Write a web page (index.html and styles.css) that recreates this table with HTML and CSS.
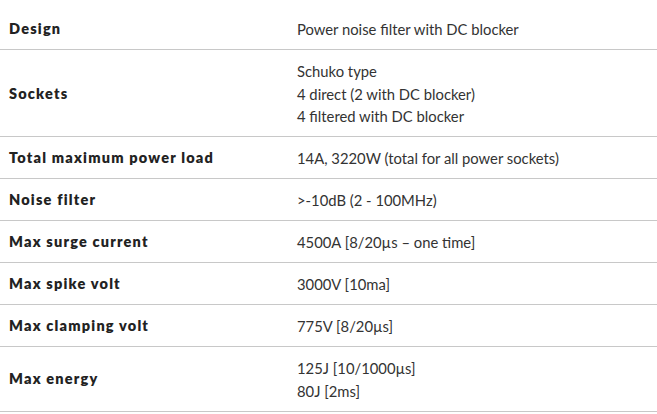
FILE: index.html
```html
<!DOCTYPE html>
<html>
<head>
<meta charset="utf-8">
<link rel="stylesheet" href="styles.css">
</head>
<body>
<table class="specs">
  <tbody>
    <tr><th>Design</th><td>Power noise filter with DC blocker</td></tr>
    <tr><th>Sockets</th><td>Schuko type<br>4 direct (2 with DC blocker)<br>4 filtered with DC blocker</td></tr>
    <tr><th>Total maximum power load</th><td>14A, 3220W (total for all power sockets)</td></tr>
    <tr><th>Noise filter</th><td>&gt;-10dB (2 - 100MHz)</td></tr>
    <tr><th>Max surge current</th><td>4500A [8/20µs – one time]</td></tr>
    <tr><th>Max spike volt</th><td>3000V [10ma]</td></tr>
    <tr><th>Max clamping volt</th><td>775V [8/20µs]</td></tr>
    <tr><th>Max energy</th><td>125J [10/1000µs]<br>80J [2ms]</td></tr>
  </tbody>
</table>
</body>
</html>
```

FILE: styles.css
```css
html, body {
  margin: 0;
  padding: 0;
  background: #fff;
}
body {
  padding-top: 8px;
  font-family: Lato, "Noto Sans", sans-serif;
}
.specs {
  width: 100%;
  border-collapse: collapse;
}
.specs th,
.specs td {
  text-align: left;
  vertical-align: middle;
  padding: 10px 9px 8.5px;
  border-bottom: 1px solid #c8c8c8;
  line-height: 22.5px;
}
.specs th {
  width: 270px;
  font-size: 14.5px;
  font-weight: 800;
  letter-spacing: 1.2px;
  color: #222;
}
.specs td {
  font-size: 14.8px;
  font-weight: 400;
  color: #333;
}
```
